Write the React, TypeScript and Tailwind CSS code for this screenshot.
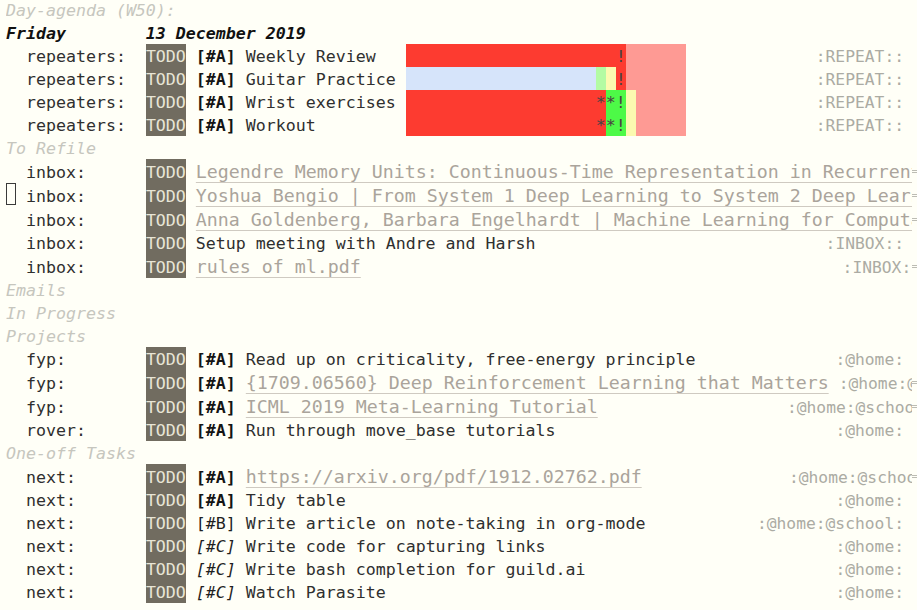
import React from "react";

const N = "whitespace-pre shrink-0 h-full leading-[27px] text-[16.6px]";
const LINK =
  "whitespace-pre shrink-0 h-full leading-[26px] text-[18.27px] text-[#aaa49b] underline decoration-[#cfcac1] decoration-1 underline-offset-[4px]";
const TAG = "whitespace-pre shrink-0 h-full leading-[27px] text-[16.3px] text-[#ababa3]";
const TXT = "text-[#2f2f2f]";
const HEAD = "italic text-[#c6c6be]";

const R = "bg-[#fd3b30]";
const P = "bg-[#fe9a94]";
const B = "bg-[#d6e4fa]";
const LG = "bg-[#b3fba3]";
const Y = "bg-[#fbfab0]";
const G = "bg-[#4dfa47]";

function Arrow() {
  return (
    <svg width="8" height="8" viewBox="0 0 8 8" className="shrink-0">
      <path d="M0 3.5H6M0 5.5H6" stroke="#bcbcb4" strokeWidth="1" />
    </svg>
  );
}

function Row({
  tall,
  fringe,
  children,
}: {
  tall?: boolean;
  fringe?: boolean;
  children?: React.ReactNode;
}) {
  return (
    <div className={`flex ${tall ? "h-[24px]" : "h-[23px]"}`}>
      <div
        className={`flex w-[906px] shrink-0 overflow-hidden ${tall ? "" : "[&>span]:leading-[25px]"}`}
      >
        {children}
      </div>
      <div className="flex flex-1 items-center overflow-hidden">{fringe && <Arrow />}</div>
    </div>
  );
}

function Todo() {
  return <span className={`${N} bg-[#716c60] text-[#e8e5d6]`}>TODO</span>;
}

function Sp() {
  return <span className={N}>{" "}</span>;
}

function Pri({ p }: { p: "A" | "B" | "C" }) {
  const cls =
    p === "A" ? "font-bold text-[#141414]" : p === "B" ? "text-[#1f1f1f]" : "italic text-[#1f1f1f]";
  return <span className={`${N} ${cls}`}>{`[#${p}]`}</span>;
}

function Txt({ children }: { children: React.ReactNode }) {
  return <span className={`${N} ${TXT}`}>{children}</span>;
}

function Fill() {
  return <span className="flex-1 min-w-0" />;
}

type Cell = [string, string];

function Habit({ cells }: { cells: Cell[] }) {
  return (
    <>
      {cells.map(([bg, ch], i) => (
        <span
          key={i}
          className={`w-[10px] shrink-0 h-full text-center leading-[27px] text-[16.6px] text-[#4a4242] ${bg}`}
        >
          {ch}
        </span>
      ))}
    </>
  );
}

function rep(n: number, bg: string): Cell[] {
  return Array.from({ length: n }, () => [bg, ""] as Cell);
}

const habit1: Cell[] = [...rep(21, R), [R, "!"], ...rep(6, P)];
const habit2: Cell[] = [...rep(19, B), [LG, ""], [Y, ""], [R, "!"], ...rep(6, P)];
const habit3: Cell[] = [...rep(19, R), [R, "*"], [G, "*"], [G, "!"], [Y, ""], ...rep(5, P)];

function Repeater({ title, cells }: { title: string; cells: Cell[] }) {
  return (
    <Row>
      <Txt>{"  repeaters:  "}</Txt>
      <Todo />
      <Sp />
      <Pri p="A" />
      <Txt>{" " + title.padEnd(16)}</Txt>
      <Habit cells={cells} />
      <Fill />
      <span className={`${TAG} mr-[8px]`}>:REPEAT::</span>
    </Row>
  );
}

function Head({ children }: { children: React.ReactNode }) {
  return (
    <Row>
      <span className={`${N} ${HEAD}`}>{children}</span>
    </Row>
  );
}

export default function App() {
  return (
    <div className="h-screen w-full overflow-hidden bg-[#fffff7] font-['DejaVu_Sans_Mono',monospace] pl-[6px]">
      <div className="-mt-[2px]">
        <Head>Day-agenda (W50):</Head>
        <Row>
          <span className={`${N} font-bold italic text-[#111111]`}>{"Friday        13 December 2019"}</span>
        </Row>
        <Repeater title="Weekly Review" cells={habit1} />
        <Repeater title="Guitar Practice" cells={habit2} />
        <Repeater title="Wrist exercises" cells={habit3} />
        <Repeater title="Workout" cells={habit3} />

        <Head>To Refile</Head>
        <Row tall fringe>
          <Txt>{"  inbox:      "}</Txt>
          <Todo />
          <Sp />
          <span className={LINK}>
            Legendre Memory Units: Continuous-Time Representation in Recurrent Neural Networks
          </span>
        </Row>
        <Row tall fringe>
          <span className="shrink-0 w-[10px] h-[22px] border border-[#3a3a3a]" />
          <Txt>{" inbox:      "}</Txt>
          <Todo />
          <Sp />
          <span className={LINK}>
            Yoshua Bengio | From System 1 Deep Learning to System 2 Deep Learning
          </span>
        </Row>
        <Row tall fringe>
          <Txt>{"  inbox:      "}</Txt>
          <Todo />
          <Sp />
          <span className={LINK}>
            Anna Goldenberg, Barbara Engelhardt | Machine Learning for Computational Biology
          </span>
        </Row>
        <Row>
          <Txt>{"  inbox:      "}</Txt>
          <Todo />
          <Txt>{" Setup meeting with Andre and Harsh"}</Txt>
          <Fill />
          <span className={`${TAG} mr-[8px]`}>:INBOX::</span>
        </Row>
        <Row tall fringe>
          <Txt>{"  inbox:      "}</Txt>
          <Todo />
          <Sp />
          <span className={LINK}>rules of ml.pdf</span>
          <Fill />
          <span className={`${TAG} -mr-[9px]`}>:INBOX::</span>
        </Row>

        <Head>Emails</Head>
        <Head>In Progress</Head>
        <Head>Projects</Head>
        <Row>
          <Txt>{"  fyp:        "}</Txt>
          <Todo />
          <Sp />
          <Pri p="A" />
          <Txt>{" Read up on criticality, free-energy principle"}</Txt>
          <Fill />
          <span className={`${TAG} mr-[8px]`}>:@home:</span>
        </Row>
        <Row tall fringe>
          <Txt>{"  fyp:        "}</Txt>
          <Todo />
          <Sp />
          <Pri p="A" />
          <Sp />
          <span className={LINK}>{"{1709.06560} Deep Reinforcement Learning that Matters"}</span>
          <span className={`${TAG} ml-[10px]`}>:@home:@school:</span>
        </Row>
        <Row tall fringe>
          <Txt>{"  fyp:        "}</Txt>
          <Todo />
          <Sp />
          <Pri p="A" />
          <Sp />
          <span className={LINK}>ICML 2019 Meta-Learning Tutorial</span>
          <Fill />
          <span className={`${TAG} -mr-[22px]`}>:@home:@school:</span>
        </Row>
        <Row>
          <Txt>{"  rover:      "}</Txt>
          <Todo />
          <Sp />
          <Pri p="A" />
          <Txt>{" Run through move_base tutorials"}</Txt>
          <Fill />
          <span className={`${TAG} mr-[8px]`}>:@home:</span>
        </Row>

        <Head>One-off Tasks</Head>
        <Row tall fringe>
          <Txt>{"  next:       "}</Txt>
          <Todo />
          <Sp />
          <Pri p="A" />
          <Sp />
          <span className={LINK}>https://arxiv.org/pdf/1912.02762.pdf</span>
          <Fill />
          <span className={`${TAG} -mr-[24px]`}>:@home:@school:</span>
        </Row>
        <Row>
          <Txt>{"  next:       "}</Txt>
          <Todo />
          <Sp />
          <Pri p="A" />
          <Txt>{" Tidy table"}</Txt>
          <Fill />
          <span className={`${TAG} mr-[8px]`}>:@home:</span>
        </Row>
        <Row>
          <Txt>{"  next:       "}</Txt>
          <Todo />
          <Sp />
          <Pri p="B" />
          <Txt>{" Write article on note-taking in org-mode"}</Txt>
          <Fill />
          <span className={`${TAG} mr-[8px]`}>:@home:@school:</span>
        </Row>
        <Row>
          <Txt>{"  next:       "}</Txt>
          <Todo />
          <Sp />
          <Pri p="C" />
          <Txt>{" Write code for capturing links"}</Txt>
          <Fill />
          <span className={`${TAG} mr-[8px]`}>:@home:</span>
        </Row>
        <Row>
          <Txt>{"  next:       "}</Txt>
          <Todo />
          <Sp />
          <Pri p="C" />
          <Txt>{" Write bash completion for guild.ai"}</Txt>
          <Fill />
          <span className={`${TAG} mr-[8px]`}>:@home:</span>
        </Row>
        <Row>
          <Txt>{"  next:       "}</Txt>
          <Todo />
          <Sp />
          <Pri p="C" />
          <Txt>{" Watch Parasite"}</Txt>
          <Fill />
          <span className={`${TAG} mr-[8px]`}>:@home:</span>
        </Row>
      </div>
    </div>
  );
}
